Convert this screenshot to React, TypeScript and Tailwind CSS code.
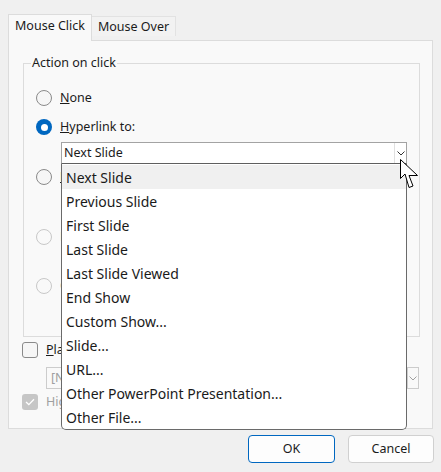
import React from 'react'

const items = [
  'Next Slide',
  'Previous Slide',
  'First Slide',
  'Last Slide',
  'Last Slide Viewed',
  'End Show',
  'Custom Show...',
  'Slide...',
  'URL...',
  'Other PowerPoint Presentation...',
  'Other File...',
]

function Radio({ checked, disabled }: { checked?: boolean; disabled?: boolean }) {
  if (checked) {
    return (
      <span className="w-4 h-4 shrink-0 rounded-full bg-[#0067c0] flex items-center justify-center">
        <span className="w-[7px] h-[7px] rounded-full bg-white" />
      </span>
    )
  }
  return (
    <span
      className={`w-4 h-4 shrink-0 rounded-full border ${
        disabled ? 'border-[#c8c8c8] bg-[#f9f9f9]' : 'border-[#8a8a8a] bg-[#f6f6f6]'
      }`}
    />
  )
}

function Chevron({ color = '#333' }: { color?: string }) {
  return (
    <svg width="8" height="5" viewBox="0 0 8 5">
      <path d="M0.5 0.5 L4 4 L7.5 0.5" fill="none" stroke={color} strokeWidth="1" />
    </svg>
  )
}

export default function App() {
  return (
    <div className="relative w-[441px] h-[472px] overflow-hidden bg-[#f0f0f0] pt-[14px] pl-[8px] text-[12.5px] text-[#1b1b1b] font-['Noto_Sans','Open_Sans',sans-serif]">
      {/* Tabs */}
      <div className="flex items-end h-[26px]">
        <div className="relative z-10 -mb-px h-[27px] w-[84px] border border-b-0 border-[#dcdcdc] bg-[#f9f9f9] flex items-center justify-center pb-[4px]">
          Mouse Click
        </div>
        <div className="mb-[4px] h-[20px] w-[84px] border-t border-r border-[#e2e2e2] bg-[#f2f2f2] flex items-center justify-center pt-[1px]">
          Mouse Over
        </div>
      </div>

      {/* Panel */}
      <div className="w-[425px] h-[389px] border border-[#dcdcdc] bg-[#f9f9f9]">
        <fieldset className="ml-[14px] mt-[13px] w-[397px] border border-[#dcdcdc] pb-[15px]">
          <legend className="ml-[7px] px-[1px] leading-[18px]">Action on click</legend>

          <div className="pl-[12px]">
            <div className="mt-[16px] h-[20px] flex items-center gap-[8px]">
              <Radio />
              <span>
                <span className="underline">N</span>one
              </span>
            </div>
            <div className="mt-[9px] h-[20px] flex items-center gap-[8px]">
              <Radio checked />
              <span>
                <span className="underline">H</span>yperlink to:
              </span>
            </div>
            <div className="mt-[5px] ml-[25px] w-[346px] h-[22px] flex items-center border border-[#a3a3a3] border-b-[#5f5f5f] bg-white">
              <span className="flex-1 pl-[2px]">Next Slide</span>
              <span className="w-[12px] h-full border-l border-[#e0e0e0] flex items-center justify-center">
                <Chevron />
              </span>
            </div>

            <div className="mt-[3px] h-[20px] flex items-center gap-[8px]">
              <Radio />
              <span>
                <span className="underline">R</span>un program:
              </span>
            </div>
            <div className="mt-[3px] ml-[25px] flex gap-[8px]">
              <div className="w-[250px] h-[23px] border border-[#c8c8c8] bg-white" />
              <div className="w-[80px] h-[23px] border border-[#d0d0d0] rounded-[4px] bg-white" />
            </div>

            <div className="mt-[14px] h-[20px] flex items-center gap-[8px] text-[#a0a0a0]">
              <Radio disabled />
              <span>
                Run <span className="underline">m</span>acro:
              </span>
            </div>
            <div className="mt-[3px] ml-[25px] w-[340px] h-[22px] border border-[#cbcbcb]" />

            <div className="mt-[4px] h-[20px] flex items-center gap-[8px] text-[#a0a0a0]">
              <Radio disabled />
              <span>
                Object <span className="underline">a</span>ction:
              </span>
            </div>
            <div className="mt-[3px] ml-[25px] w-[340px] h-[22px] border border-[#cbcbcb]" />
          </div>
        </fieldset>

        <div className="mt-[5px] ml-[13px] h-[16px] flex items-center gap-[8px]">
          <span className="w-4 h-4 shrink-0 rounded-[3px] border border-[#8a8a8a] bg-[#f6f6f6]" />
          <span>
            <span className="underline">P</span>lay sound:
          </span>
        </div>
        <div className="mt-[9px] ml-[37px] w-[373px] h-[22px] flex items-center border border-[#cccccc] text-[#a0a0a0]">
          <span className="flex-1 pl-[4px]">[No Sound]</span>
          <span className="w-[11px] h-full border-l border-[#cccccc] flex items-center justify-center">
            <Chevron color="#a0a0a0" />
          </span>
        </div>
        <div className="mt-[5px] ml-[13px] h-[16px] flex items-center gap-[8px] text-[#a0a0a0]">
          <span className="w-4 h-4 shrink-0 rounded-[3px] bg-[#c6c6c6] flex items-center justify-center">
            <svg width="10" height="8" viewBox="0 0 10 8">
              <path d="M1 4 L3.8 6.6 L9 1.2" fill="none" stroke="white" strokeWidth="1.3" />
            </svg>
          </span>
          <span>Highlight click</span>
        </div>
      </div>

      {/* Buttons */}
      <div className="mt-[6px] pr-[7px] flex justify-end gap-[13px]">
        <button className="w-[87px] h-[28px] rounded-[4px] border border-[#0067c0] bg-[#fdfdfd]">OK</button>
        <button className="w-[86px] h-[28px] rounded-[4px] border border-[#d0d0d0] bg-[#fdfdfd]">Cancel</button>
      </div>

      {/* Open dropdown list */}
      <div className="absolute left-[61px] top-[164px] w-[346px] h-[266px] pt-px border-x border-b border-[#6a6a6a] rounded-b-[5px] bg-white text-[14px] text-[#1a1a1a] overflow-hidden">
        {items.map((item, i) => (
          <div
            key={item}
            className={`h-[24px] pl-[4px] flex items-center ${i === 0 ? 'bg-[#f0f0f0]' : ''}`}
          >
            {item}
          </div>
        ))}
      </div>

      {/* Mouse cursor */}
      <svg className="absolute left-[400px] top-[159px]" width="20" height="31" viewBox="0 0 20 31">
        <path
          d="M0.5 0.5 L0.5 19.5 L5 15 L9 28.5 L13 27 L9 16.5 L17.5 16.5 Z"
          fill="white"
          stroke="black"
          strokeWidth="1"
          strokeLinejoin="round"
        />
      </svg>
    </div>
  )
}
